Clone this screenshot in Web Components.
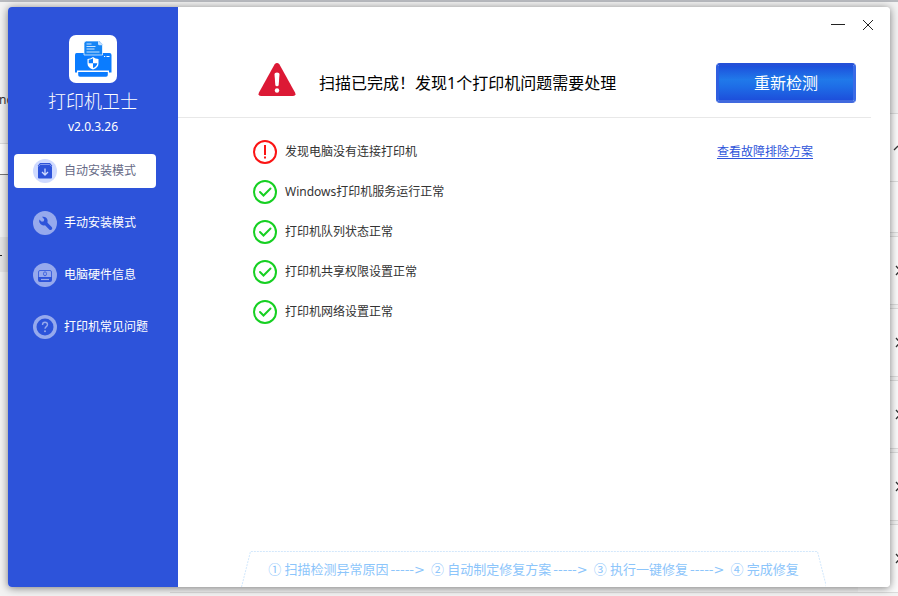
<!DOCTYPE html>
<html lang="zh-CN">
<head>
<meta charset="utf-8">
<title>打印机卫士</title>
<style>
	body {
		margin: 0;
		font-family: "Noto Sans", "Noto Sans CJK SC", sans-serif;
		font-size: 12px;
		line-height: 20px;
		color: #333;
		background-color: #f3f3f3;
	}
</style>
</head>
<body>

<printer-guard></printer-guard>

<script>
// Builds a <template> from a string, used by every component below
function template(html) {
	const element = document.createElement("template");
	element.innerHTML = html;
	return element;
}

class BaseComponent extends HTMLElement {

	constructor() {
		super();
		this.attachShadow({ mode: "open" });
		this.shadowRoot.append(this.constructor.template.content.cloneNode(true));
	}
}


// What shows of the page behind the window
class DesktopBackdrop extends BaseComponent {}

DesktopBackdrop.template = template(`
<style>
	:host {
		position: absolute;
		inset: 0;
		display: flex;
		justify-content: space-between;
		overflow: hidden;
		border-top: 2px solid #b9bbc0;
		box-sizing: border-box;
	}
	svg {
		display: block;
		flex: none;
	}
	.rule {
		flex: 1;
		align-self: flex-end;
		margin-bottom: 3px;
		border-top: 1px solid #dcdcdc;
	}
	span {
		position: absolute;
		left: -1px;
		top: 88px;
		color: #333;
	}
</style>
<svg width="170" height="594" viewBox="0 2 170 594" aria-hidden="true">
	<path d="M0 2h170v594H0z" fill="#f3f3f3"/>
	<path d="M0 143h20v31H0z" fill="#fff"/>
	<path d="M0 143.500h20" stroke="#ddd"/>
	<path d="M0 174.500h20" stroke="#777"/>
	<path d="M0 237h20v35H0z" fill="#e6e6e6"/>
	<path d="M0 255.500h2" stroke="#222"/>
</svg>
<div class="rule"></div>
<span>nd</span>
<svg width="40" height="594" viewBox="858 2 40 594" aria-hidden="true">
	<path d="M858 2h40v594h-40z" fill="#f3f3f3"/>
	<g fill="#fbfbfb" stroke="#dcdcdc">
		<path d="M850 113.500h60v119h-60zM850 236.500h60v68h-60zM850 308.500h60v68h-60zM850 380.500h60v68h-60zM850 452.500h60v68h-60zM850 524.500h60v68h-60z"/>
		<path d="M850 181.500h60"/>
	</g>
	<path d="M894 150l4-4M896 266l4 4.500-4 4.500M896 338l4 4.500-4 4.500M896 410l4 4.500-4 4.500M896 482l4 4.500-4 4.500M896 554l4 4.500-4 4.500" fill="none" stroke="#333" stroke-width="1.300"/>
</svg>
`);

customElements.define("desktop-backdrop", DesktopBackdrop);


class AppBrand extends BaseComponent {}

AppBrand.template = template(`
<style>
	:host {
		display: flex;
		flex-direction: column;
		align-items: center;
		color: #fff;
	}
	svg {
		display: block;
	}
	h1 {
		margin: 4px 0 0;
		font-size: 18px;
		font-weight: 300;
		line-height: 28px;
	}
	p {
		margin: 2px 0 0;
	}
</style>
<svg width="48" height="48" viewBox="0 0 48 48" aria-hidden="true">
	<rect width="48" height="48" rx="7" fill="#fff"/>
	<path d="M7.500 18h33q2 0 2 2v17.500H40V35.500H8v2H6V20q0-2 1.500-2z" fill="#0a7cff"/>
	<path d="M9.200 37h29.600v3q0 1.800-1.800 1.800H11q-1.800 0-1.800-1.800z" fill="#0a7cff"/>
	<path d="M15 20V8.500Q15 6 17.500 6h12.800L33.500 9.200V20z" fill="#1585f5" stroke="#fff" stroke-width=".7"/>
	<path d="M29 5.500l5 4.700h-3.500q-1.500 0-1.500-1.500z" fill="#c5e1ff"/>
	<path d="M17.500 9h5M17.500 11.500h9M17.500 14h8M17.500 17h13" stroke="#c9e3ff"/>
	<path d="M35 21.500h1.200M37.500 21.500h3" stroke="#fff"/>
	<path d="M24 22q2.500 1.800 5.500 2v4.500q0 4-5.500 6-5.500-2-5.500-6V24q3-.2 5.500-2z" fill="#fff"/>
	<path d="M24 23.300v5h-4.300v-3.500q2.300-.2 4.300-1.500zM24 28.300h4.300q-.3 3.200-4.300 4.800z" fill="#0a7cff"/>
</svg>
<h1>打印机卫士</h1>
<p>v2.0.3.26</p>
`);

customElements.define("app-brand", AppBrand);


class NavItem extends BaseComponent {}

NavItem.template = template(`
<style>
	:host {
		display: block;
		--disc: rgba(255, 255, 255, .5);
	}
	button {
		display: flex;
		align-items: center;
		gap: 7px;
		width: 100%;
		height: 34px;
		padding: 0 0 0 19px;
		border: 0;
		border-radius: 4px;
		background: none;
		color: #fff;
		font: inherit;
		cursor: pointer;
	}
	:host([active]) {
		--disc: #cfdaff;
	}
	:host([active]) button {
		background-color: #fff;
		color: #666a86;
	}
	.disc {
		display: flex;
		width: 24px;
		height: 24px;
		border-radius: 50%;
		background-color: var(--disc);
	}
</style>
<button type="button">
	<span class="disc"><slot name="icon"></slot></span>
	<slot></slot>
</button>
`);

customElements.define("nav-item", NavItem);


class SideBar extends BaseComponent {}

SideBar.template = template(`
<style>
	:host {
		display: block;
		flex: 0 0 170px;
		padding-top: 28px;
		box-sizing: border-box;
		background-color: #2d53da;
	}
	nav {
		display: flex;
		flex-direction: column;
		gap: 18px;
		padding: 17px 22px 0 6px;
	}
	svg {
		width: 24px;
		height: 24px;
	}
</style>
<app-brand></app-brand>
<nav>
	<nav-item active>
		<svg slot="icon" viewBox="0 0 24 24" aria-hidden="true">
			<path d="M7 4h10l2 2.500v12q0 1-1 1H6q-1 0-1-1v-12z" fill="#2d53da"/>
			<path d="M5.500 7.500l1.800-2h9.400l1.800 2" fill="none" stroke="#8299ee"/>
			<path d="M12 9.500v6M9 13l3 3 3-3" fill="none" stroke="#cfdaff" stroke-width="1.300"/>
		</svg>
		自动安装模式
	</nav-item>
	<nav-item>
		<svg slot="icon" viewBox="0 0 24 24" aria-hidden="true">
			<path d="M9 5.800l2.200 2.500-.4 2-2 .5L6.300 8.500a4.600 4.600 0 0 0 5.700 5.700l4.200 4.200a1.700 1.700 0 0 0 2.500-2.500l-4.200-4.200A4.600 4.600 0 0 0 9 5.800z" fill="#2d53da"/>
		</svg>
		手动安装模式
	</nav-item>
	<nav-item>
		<svg slot="icon" viewBox="0 0 24 24" aria-hidden="true">
			<path d="M5.500 14V9q0-1.500 1.500-1.500h10q1.500 0 1.500 1.500v5" fill="none" stroke="#4064de"/>
			<ellipse cx="12" cy="10.800" rx="1.500" ry="2" fill="none" stroke="#4064de"/>
			<path d="M5 14h14v3q0 2-2 2H7q-2 0-2-2z" fill="#2d53da"/>
			<path d="M8 16.500h8" stroke="#96a9ed" stroke-width="1.200"/>
		</svg>
		电脑硬件信息
	</nav-item>
	<nav-item>
		<svg slot="icon" viewBox="0 0 24 24" aria-hidden="true">
			<circle cx="12" cy="12" r="8.500" fill="#2d53da"/>
			<path d="M9.500 10q0-2.700 2.500-2.700t2.500 2.200q0 1.200-1.200 2.100T12 13.700" fill="none" stroke="#96a9ed" stroke-width="1.400"/>
			<circle cx="12" cy="16.300" r="1" fill="#96a9ed"/>
		</svg>
		打印机常见问题
	</nav-item>
</nav>
`);

customElements.define("side-bar", SideBar);


class WindowControls extends BaseComponent {}

WindowControls.template = template(`
<style>
	:host {
		display: flex;
		justify-content: flex-end;
		height: 36px;
		padding-right: 7px;
	}
	button {
		display: flex;
		align-items: center;
		justify-content: center;
		width: 30px;
		padding: 0;
		border: 0;
		background: none;
	}
	svg {
		width: 14px;
		height: 14px;
		fill: none;
		stroke: #222;
	}
</style>
<button type="button" aria-label="最小化"><svg viewBox="0 0 14 14"><path d="M0 6.500h14"/></svg></button>
<button type="button" aria-label="关闭"><svg viewBox="0 0 14 14"><path d="M2 2l10 10M12 2L2 12"/></svg></button>
`);

customElements.define("window-controls", WindowControls);


class ScanHeader extends BaseComponent {}

ScanHeader.template = template(`
<style>
	:host {
		display: flex;
		align-items: center;
		gap: 23px;
		margin-right: 19px;
		padding: 20px 15px 14px 80px;
		border-bottom: 1px solid #e8e8e8;
	}
	svg {
		flex: none;
		margin-bottom: 6px;
	}
	h2 {
		flex: 1;
		margin: 0;
		font-size: 16px;
		font-weight: 400;
		line-height: 24px;
		color: #000;
	}
	button {
		width: 140px;
		height: 40px;
		padding: 0;
		border: 3px solid #2f5fe0;
		border-color: #2450d8 #3a6be6 #4069de #2f5fe0;
		border-radius: 4px;
		background: linear-gradient(#1d50dc, #2079ea 40%, #1e6ee7 60%, #1d4fdb);
		color: #fff;
		font: inherit;
		font-size: 16px;
		cursor: pointer;
	}
</style>
<svg width="38" height="34" viewBox="0 0 38 34" aria-hidden="true">
	<path d="M16.500 1.500q2.500-2.800 5 0L37 29.500q1.500 3.500-2 3.500H3q-3.500 0-2-3.500z" fill="#dc1935"/>
	<path d="M16.500 11q0-1.500 2.500-1.500t2.500 1.500l-.8 11q-.2 1.200-1.700 1.200T17.300 22z" fill="#fff"/>
	<circle cx="19" cy="27.500" r="2.200" fill="#fff"/>
</svg>
<h2><slot></slot></h2>
<button type="button">重新检测</button>
`);

customElements.define("scan-header", ScanHeader);


// One line of the scan, state is "ok" or "error"
class ScanResult extends BaseComponent {

	static get observedAttributes() {
		return ["state"];
	}

	attributeChangedCallback(name, oldValue, newValue) {
		this.shadowRoot.querySelector("svg").innerHTML = newValue === "error"
			? '<circle cx="12" cy="12" r="11" stroke="#fb1414"/><path d="M12 5v10M12 16.500v2" stroke="#fb1414"/>'
			: '<circle cx="12" cy="12" r="11" stroke="#16d022"/><path d="M7 12l3.500 3.500 7-7" stroke="#16d022" stroke-linecap="round"/>';
	}
}

ScanResult.template = template(`
<style>
	:host {
		display: flex;
		align-items: center;
		gap: 8px;
		height: 40px;
	}
	svg {
		flex: none;
		fill: none;
		stroke-width: 2;
	}
	span {
		flex: 1;
	}
</style>
<svg width="24" height="24" viewBox="0 0 24 24" aria-hidden="true"></svg>
<span><slot></slot></span>
<slot name="action"></slot>
`);

customElements.define("scan-result", ScanResult);


class StepsBar extends BaseComponent {}

StepsBar.template = template(`
<style>
	:host {
		position: relative;
		display: block;
		margin: auto 64px 0 63px;
	}
	svg {
		position: absolute;
		inset: 0;
		width: 100%;
		height: 100%;
		fill: none;
		stroke: #d3e8fc;
		stroke-dasharray: 2 1;
	}
	ol {
		position: relative;
		display: flex;
		justify-content: center;
		gap: 6px;
		margin: 0;
		padding: 8px 0 7px;
		list-style: none;
		font-size: 13px;
		color: #8cc5fb;
		white-space: nowrap;
	}
	li:not(:last-child)::after {
		content: "----->";
		margin-left: 2px;
		font-family: "DejaVu Sans", sans-serif;
	}
</style>
<svg viewBox="0 0 585 35" preserveAspectRatio="none" aria-hidden="true">
	<path d="M.5 35L9.500.5h567l9 34.500"/>
</svg>
<ol>
	<li>① 扫描检测异常原因</li>
	<li>② 自动制定修复方案</li>
	<li>③ 执行一键修复</li>
	<li>④ 完成修复</li>
</ol>
`);

customElements.define("steps-bar", StepsBar);


class PrinterGuard extends BaseComponent {}

PrinterGuard.template = template(`
<style>
	:host {
		position: relative;
		display: flex;
		min-height: 100vh;
		padding: 7px 8px 9px;
		box-sizing: border-box;
	}
	.window {
		position: relative;
		display: flex;
		flex: 1;
		overflow: hidden;
		border-radius: 4px;
		background-color: #fff;
	}
	.shadow {
		position: relative;
		display: flex;
		flex: 1;
		border-radius: 4px;
		box-shadow: 0 1px 8px rgba(0, 0, 0, .5);
	}
	main {
		display: flex;
		flex: 1;
		flex-direction: column;
		min-width: 0;
	}
	ul {
		margin: 0;
		padding: 14px 77px 0 75px;
		list-style: none;
	}
	a {
		color: #2d53da;
		text-underline-offset: 2px;
	}
</style>
<desktop-backdrop></desktop-backdrop>
<div class="shadow">
	<div class="window">
		<side-bar></side-bar>
		<main>
			<window-controls></window-controls>
			<scan-header>扫描已完成！发现1个打印机问题需要处理</scan-header>
			<ul>
				<li><scan-result state="error">发现电脑没有连接打印机<a slot="action" href="#">查看故障排除方案</a></scan-result></li>
				<li><scan-result state="ok">Windows打印机服务运行正常</scan-result></li>
				<li><scan-result state="ok">打印机队列状态正常</scan-result></li>
				<li><scan-result state="ok">打印机共享权限设置正常</scan-result></li>
				<li><scan-result state="ok">打印机网络设置正常</scan-result></li>
			</ul>
			<steps-bar></steps-bar>
		</main>
	</div>
</div>
`);

customElements.define("printer-guard", PrinterGuard);
</script>
</body>
</html>
